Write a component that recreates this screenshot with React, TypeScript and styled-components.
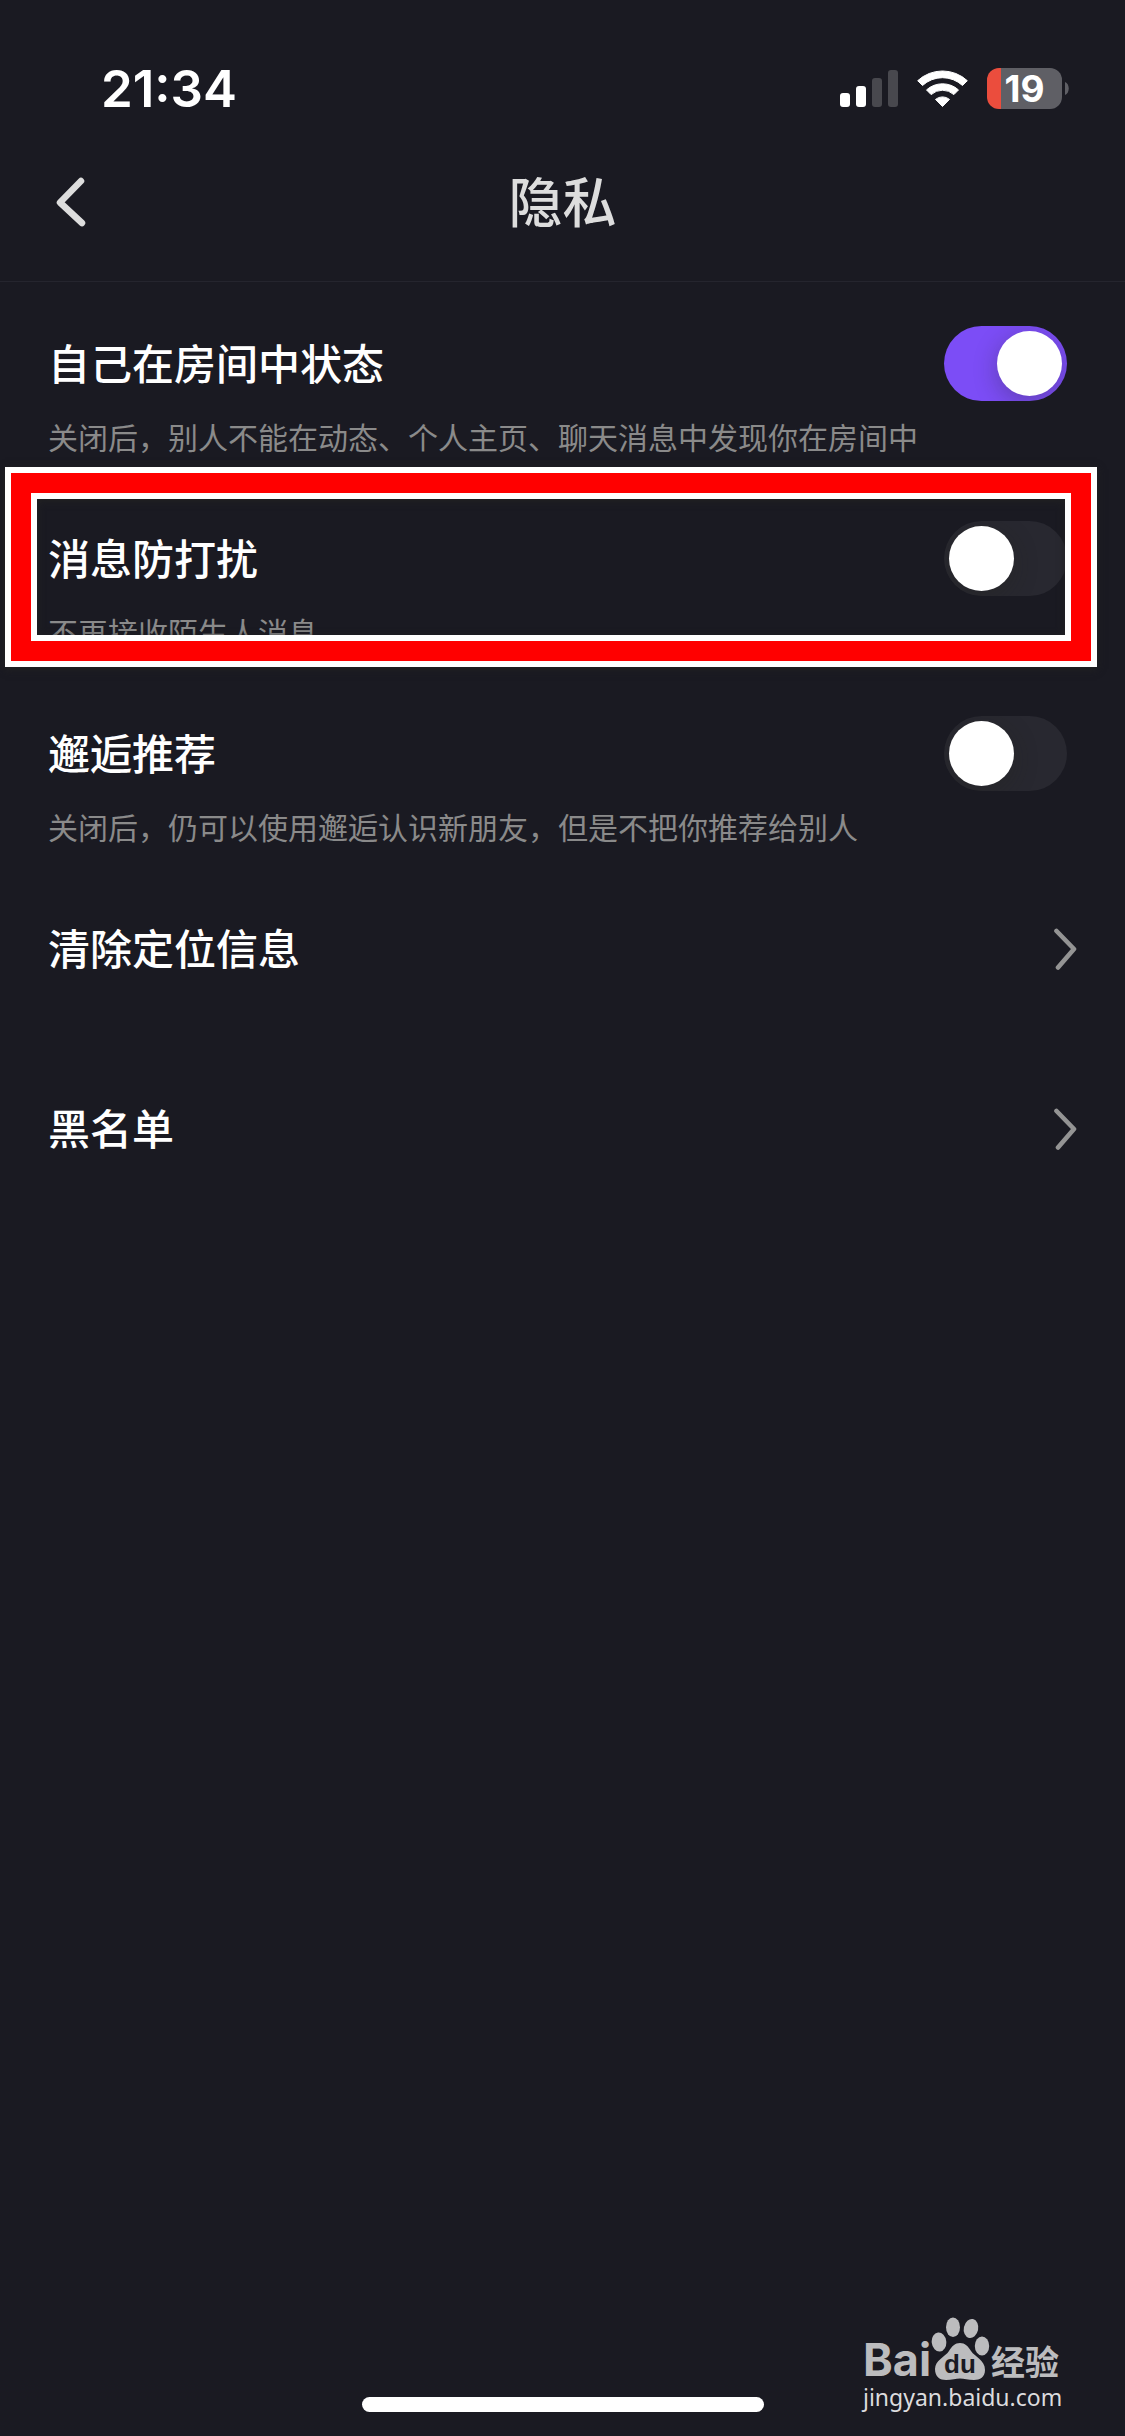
import React from "react";
import styled, { createGlobalStyle } from "styled-components";

const CJK = `"Noto Sans CJK SC", "Noto Sans", sans-serif`;

const GlobalStyle = createGlobalStyle`
  *, *::before, *::after { box-sizing: border-box; }
  body { margin: 0; background: #1a1a22; }
`;

const Screen = styled.div`
  position: relative;
  display: flex;
  flex-direction: column;
  min-height: 100vh;
  background: #1a1a22;
  color: #fff;
  font-family: ${CJK};
`;

const StatusBar = styled.div`
  display: flex;
  align-items: center;
  justify-content: space-between;
  height: 123px;
  padding: 54px 56px 0 101px;
`;

const Clock = styled.time`
  font: 600 51px/60px Inter, sans-serif;
`;

const StatusIcons = styled.div`
  display: flex;
  align-items: center;
  gap: 19px;
`;

const BatteryWrap = styled.div`
  display: flex;
  align-items: center;
  gap: 3px;
`;

const Battery = styled.div`
  display: flex;
  align-items: center;
  justify-content: center;
  width: 75px;
  height: 41px;
  border-radius: 12px;
  background: linear-gradient(to right, #eb4d3d 14px, #5f5f65 14px);
  font: 700 37px/41px Inter, sans-serif;
`;

const Header = styled.header`
  display: grid;
  grid-template-columns: 1fr auto 1fr;
  align-items: center;
  height: 159px;
  padding: 0 48px;
  border-bottom: 1px solid #25252e;
`;

const BackButton = styled.button`
  display: flex;
  justify-self: start;
  padding: 8px;
  border: 0;
  background: none;
  color: #ddd;
`;

const PageTitle = styled.h1`
  margin: 0;
  padding-bottom: 4px;
  color: #ddd;
  font-size: 54px;
  font-weight: 500;
  line-height: 80px;
`;

const List = styled.main`
  flex: 1;
`;

const SwitchRow = styled.section`
  position: relative;
  height: 195px;
  padding: 44px 58px 0 48px;
`;

const RowHead = styled.div`
  display: flex;
  align-items: center;
  justify-content: space-between;
  height: 75px;
`;

const RowLabel = styled.label`
  padding-bottom: 4px;
  font-size: 42px;
  font-weight: 500;
  line-height: 60px;
`;

const Description = styled.p`
  margin: 14px 0 0;
  color: #8a8a8a;
  font-size: 30px;
  font-weight: 400;
  line-height: 42px;
`;

const Switch = styled.input`
  appearance: none;
  display: flex;
  flex: none;
  justify-content: flex-start;
  overflow: hidden;
  width: 123px;
  height: 75px;
  margin: 0;
  padding: 5px;
  border-radius: 38px;
  background: #282830;

  &::before {
    content: "";
    width: 65px;
    height: 65px;
    border-radius: 50%;
    background: #fff;
    box-shadow: 0 6px 24px rgba(32, 32, 24, 0.3);
  }

  &:checked {
    justify-content: flex-end;
    background: #7c4df6;
  }
`;

const Highlight = styled.div`
  position: absolute;
  top: -10px;
  left: 5px;
  right: 28px;
  height: 200px;
  border: 6px solid #fff;
  box-shadow: 0 2px 8px #222;
  pointer-events: none;

  &::before,
  &::after {
    content: "";
    position: absolute;
  }

  &::before {
    inset: 0;
    border: 20px solid #f00;
  }

  &::after {
    inset: 20px;
    border: 6px solid #fff;
    box-shadow: inset 0 2px 8px #222;
  }
`;

const LinkRow = styled.a`
  display: flex;
  align-items: center;
  justify-content: space-between;
  height: 180px;
  padding: 0 48px 16px;
  color: #fff;
  text-decoration: none;
`;

const LinkLabel = styled.span`
  padding-bottom: 4px;
  font-size: 42px;
  font-weight: 500;
  line-height: 60px;
`;

const HomeArea = styled.footer`
  display: flex;
  justify-content: center;
  padding-bottom: 24px;
`;

const HomeIndicator = styled.div`
  width: 402px;
  height: 15px;
  border-radius: 8px;
  background: #fff;
`;

const Watermark = styled.div`
  position: absolute;
  right: 62px;
  bottom: 23px;
  width: 200px;
  color: #bcbcbe;
`;

const Brand = styled.div`
  display: flex;
  align-items: flex-end;
`;

const BrandLatin = styled.span`
  font: 700 45px/42px Inter, sans-serif;
`;

const BrandCjk = styled.span`
  padding-bottom: 2px;
  font: 700 34px/36px ${CJK};
`;

const BrandUrl = styled.div`
  color: #dcdcde;
  font: 400 23px/32px "Noto Sans", sans-serif;
`;

function SignalIcon() {
  return (
    <svg width="58" height="37" aria-hidden="true">
      <g fill="#fff">
        <rect x="0" y="23" width="10" height="14" rx="3" />
        <rect x="16" y="16" width="10" height="21" rx="3" />
      </g>
      <g fill="#48484e">
        <rect x="32" y="8" width="10" height="29" rx="3" />
        <rect x="48" y="0" width="10" height="37" rx="3" />
      </g>
    </svg>
  );
}

function WifiIcon() {
  return (
    <svg width="51" height="38" viewBox="-25.5 -37.5 51 38" fill="#fff" stroke="#fff" strokeLinejoin="round" aria-hidden="true">
      <path d="M-24.8 -26.8A36.5 36.5 0 0 1 24.8 -26.8L20 -22A29.5 29.5 0 0 0 -20 -22Z" />
      <path d="M-16 -17.6A24 24 0 0 1 16 -17.6L11.4 -12.9A17 17 0 0 0 -11.4 -12.9Z" />
      <path d="M-7 -8.1A11 11 0 0 1 7 -8.1L0 -1Z" />
    </svg>
  );
}

function BackIcon() {
  return (
    <svg width="30" height="50" fill="none" stroke="currentColor" strokeWidth="6.5" strokeLinecap="round" strokeLinejoin="round" aria-hidden="true">
      <path d="M25 4L4 25.5L26 46" />
    </svg>
  );
}

function ChevronIcon() {
  return (
    <svg width="24" height="42" fill="none" stroke="#949494" strokeWidth="4.6" strokeLinecap="round" strokeLinejoin="round" aria-hidden="true">
      <path d="M3.500 3L21 21L5 39.500" />
    </svg>
  );
}

function PawIcon() {
  return (
    <svg width="60" height="64" fill="currentColor" aria-hidden="true">
      <ellipse cx="8" cy="25" rx="7.3" ry="9.5" transform="rotate(-6 8 25)" />
      <ellipse cx="22" cy="10.3" rx="7" ry="9.8" />
      <ellipse cx="40" cy="11.5" rx="7.2" ry="9.6" transform="rotate(12 40 11.5)" />
      <ellipse cx="51" cy="29" rx="7.2" ry="9.5" />
      <path d="M29 26C34 26 37 29 40 34C44 40 54 43 54 53C54 60 49 63 43 63C37 63 33 61.5 29 61.5C25 61.5 21 63 15 63C9 63 4 60 4 52C4 43 14 40 18 34C21 29 24 26 29 26Z" />
      <text x="13" y="56" fill="#1a1a22" fontFamily="Liberation Sans, sans-serif" fontSize="26" fontWeight="700">
        du
      </text>
    </svg>
  );
}

type SwitchSetting = {
  id: string;
  label: string;
  description: string;
  on: boolean;
  highlighted?: boolean;
};

const switches: SwitchSetting[] = [
  {
    id: "room-status",
    label: "自己在房间中状态",
    description: "关闭后，别人不能在动态、个人主页、聊天消息中发现你在房间中",
    on: true,
  },
  {
    id: "do-not-disturb",
    label: "消息防打扰",
    description: "不再接收陌生人消息",
    on: false,
    highlighted: true,
  },
  {
    id: "recommend",
    label: "邂逅推荐",
    description: "关闭后，仍可以使用邂逅认识新朋友，但是不把你推荐给别人",
    on: false,
  },
];

const links = [
  { href: "#location", label: "清除定位信息" },
  { href: "#blocklist", label: "黑名单" },
];

export default function App() {
  return (
    <Screen lang="zh-CN">
      <GlobalStyle />
      <StatusBar>
        <Clock>21:34</Clock>
        <StatusIcons>
          <SignalIcon />
          <WifiIcon />
          <BatteryWrap>
            <Battery>19</Battery>
            <svg width="4" height="13" aria-hidden="true">
              <path d="M0 0C5 2 5 11 0 13Z" fill="#5f5f65" />
            </svg>
          </BatteryWrap>
        </StatusIcons>
      </StatusBar>
      <Header>
        <BackButton type="button" aria-label="返回">
          <BackIcon />
        </BackButton>
        <PageTitle>隐私</PageTitle>
      </Header>
      <List>
        {switches.map((item) => (
          <SwitchRow key={item.id}>
            <RowHead>
              <RowLabel htmlFor={item.id}>{item.label}</RowLabel>
              <Switch
                id={item.id}
                type="checkbox"
                role="switch"
                defaultChecked={item.on}
                aria-describedby={`${item.id}-description`}
              />
            </RowHead>
            <Description id={`${item.id}-description`}>{item.description}</Description>
            {item.highlighted && <Highlight />}
          </SwitchRow>
        ))}
        {links.map((item) => (
          <LinkRow key={item.href} href={item.href}>
            <LinkLabel>{item.label}</LinkLabel>
            <ChevronIcon />
          </LinkRow>
        ))}
      </List>
      <HomeArea>
        <HomeIndicator />
      </HomeArea>
      <Watermark>
        <Brand>
          <BrandLatin>Bai</BrandLatin>
          <PawIcon />
          <BrandCjk>经验</BrandCjk>
        </Brand>
        <BrandUrl>jingyan.baidu.com</BrandUrl>
      </Watermark>
    </Screen>
  );
}
